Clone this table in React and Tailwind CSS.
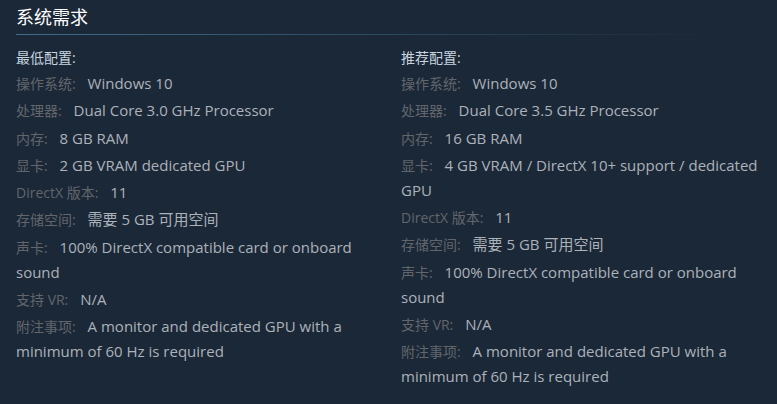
import React from 'react';

const minimum = [
  ['操作系统:', 'Windows 10'],
  ['处理器:', 'Dual Core 3.0 GHz Processor'],
  ['内存:', '8 GB RAM'],
  ['显卡:', '2 GB VRAM dedicated GPU'],
  ['DirectX 版本:', '11'],
  ['存储空间:', '需要 5 GB 可用空间'],
  ['声卡:', '100% DirectX compatible card or onboard sound'],
  ['支持 VR:', 'N/A'],
  ['附注事项:', 'A monitor and dedicated GPU with a minimum of 60 Hz is required'],
];

const recommended = [
  ['操作系统:', 'Windows 10'],
  ['处理器:', 'Dual Core 3.5 GHz Processor'],
  ['内存:', '16 GB RAM'],
  ['显卡:', '4 GB VRAM / DirectX 10+ support / dedicated GPU'],
  ['DirectX 版本:', '11'],
  ['存储空间:', '需要 5 GB 可用空间'],
  ['声卡:', '100% DirectX compatible card or onboard sound'],
  ['支持 VR:', 'N/A'],
  ['附注事项:', 'A monitor and dedicated GPU with a minimum of 60 Hz is required'],
];

function ReqColumn({ title, rows }) {
  return (
    <div>
      <div className="text-[14px] leading-[25px] mb-[1px] text-[#c6d4df]">{title}</div>
      <ul>
        {rows.map(([label, value]) => (
          <li key={label} className="mb-[2.25px] text-[15px] leading-[25px] text-[#acb2b8]">
            <span className="mr-[8px] text-[14px] text-[#62666b]">{label}</span> {value}
          </li>
        ))}
      </ul>
    </div>
  );
}

export default function App() {
  return (
    <div
      className="w-[777px] h-[404px] bg-[#1b2838] px-4 overflow-hidden"
      style={{ fontFamily: '"Open Sans", "Noto Sans CJK SC", Arial, sans-serif' }}
    >
      <h2 className="pt-1 pb-1 text-[18px] leading-[26px] text-white font-normal">系统需求</h2>
      <div className="h-px w-[705px] bg-gradient-to-r from-[#3e6d8c] to-transparent" />
      <div className="grid grid-cols-[369px_1fr] gap-x-4 mt-[10px]">
        <ReqColumn title="最低配置:" rows={minimum} />
        <ReqColumn title="推荐配置:" rows={recommended} />
      </div>
    </div>
  );
}
